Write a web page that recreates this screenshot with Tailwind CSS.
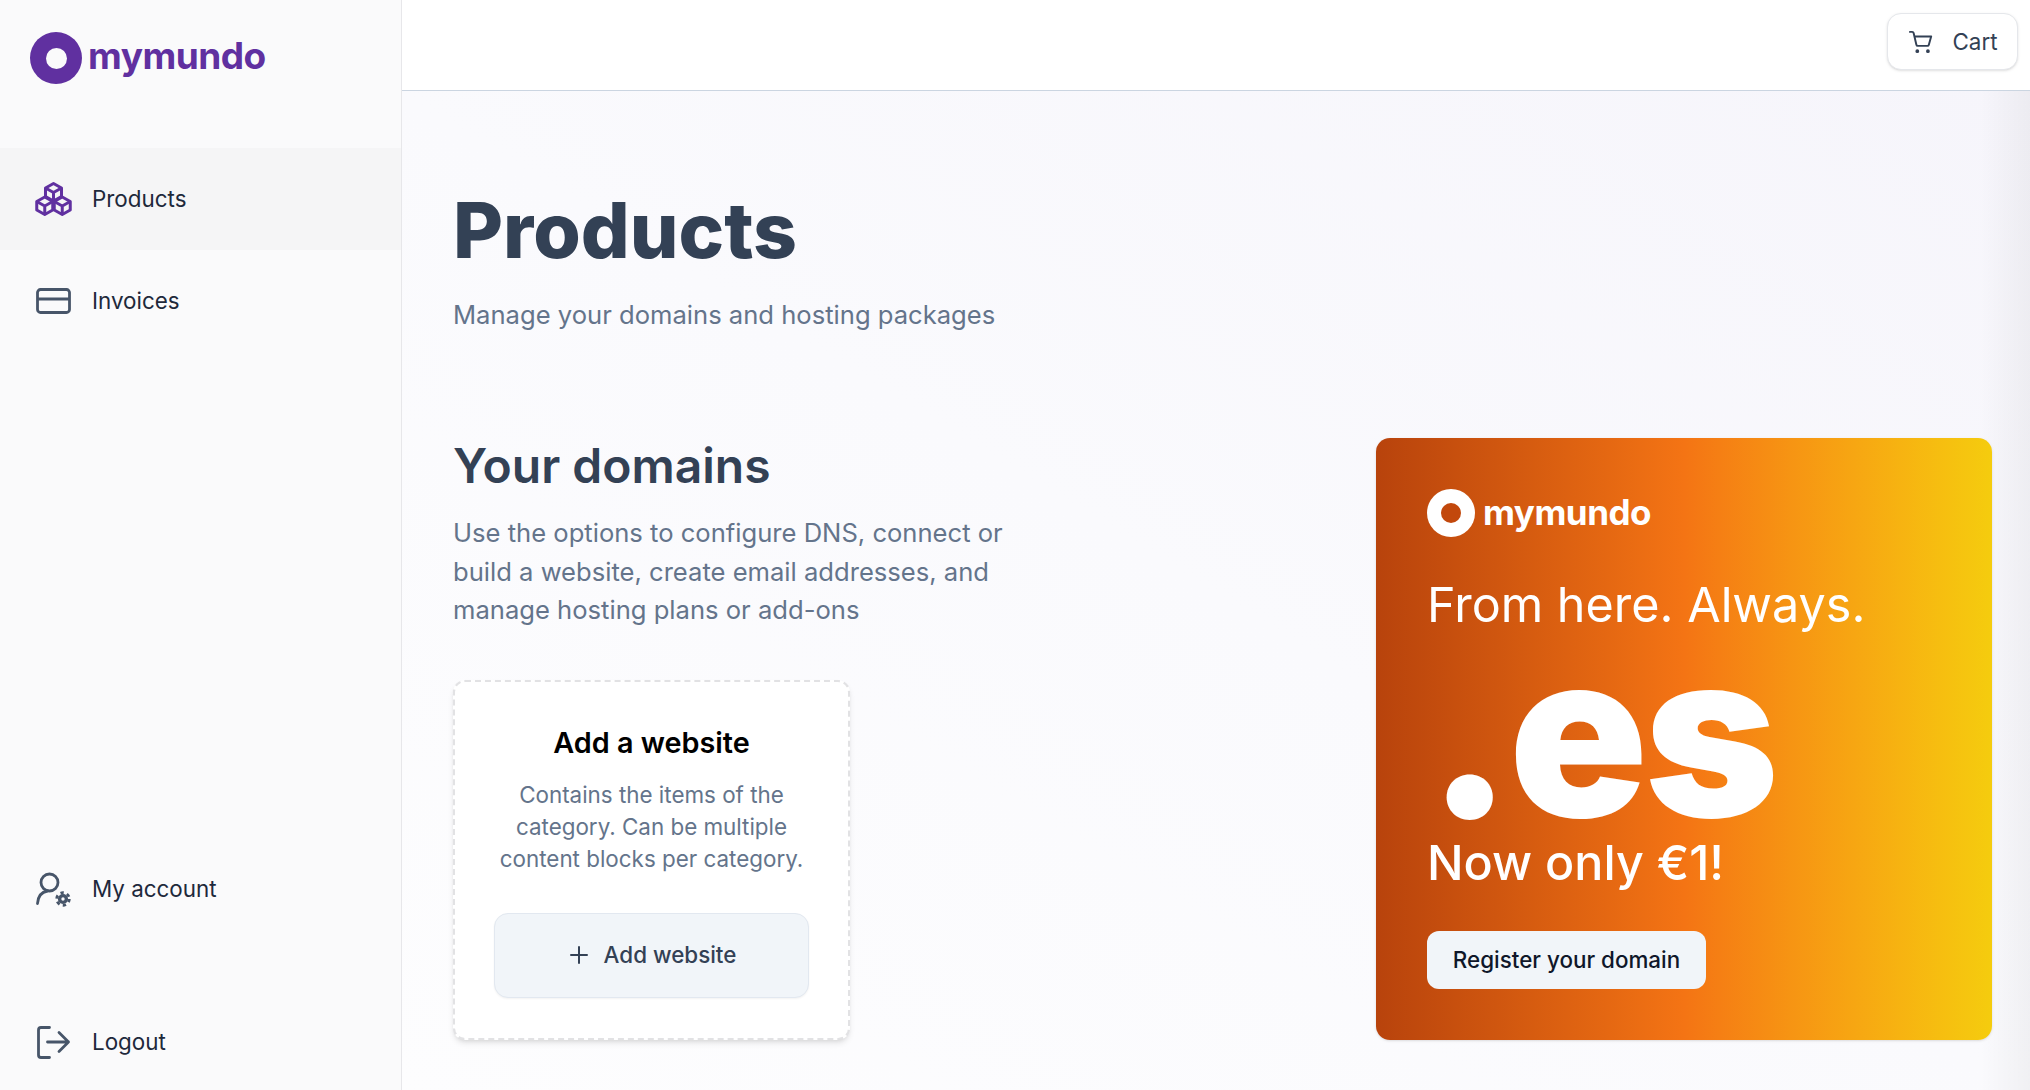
<!DOCTYPE html>
<html lang="en">
<head>
  <meta charset="UTF-8" />
  <meta name="viewport" content="width=device-width, initial-scale=1.0" />
  <script src="https://cdn.jsdelivr.net/npm/@tailwindcss/browser@4"></script>
  <title>Products</title>
</head>
<body class="h-screen overflow-hidden flex bg-white font-['Inter',sans-serif]">

  <!-- Sidebar -->
  <aside class="w-[402px] shrink-0 h-[1090px] flex flex-col bg-[#fafafb] border-r border-[#e7e7ea] overflow-hidden">
    <div class="h-[148px] pl-[30px] pt-[32px] flex items-start gap-[6px]">
      <div class="w-[52px] h-[52px] rounded-full bg-[#6030a0] flex items-center justify-center">
        <div class="w-[21px] h-[21px] rounded-full bg-[#fafafb]"></div>
      </div>
      <span class="pt-[2px] text-[37px] leading-[44px] font-bold tracking-[-0.5px] text-[#6030a0]">mymundo</span>
    </div>

    <nav class="flex flex-col">
      <a class="h-[102px] flex items-center bg-[#f5f5f6] pl-[35px] gap-[20px] text-[22.4px] text-[#1e293b]">
        <svg width="37" height="36" viewBox="0 0 37 36" fill="none" stroke="#6030a0" stroke-width="3" stroke-linejoin="round">
          <path d="M18.500 2.500l8 4.500v8.500l-8 4.500-8-4.500v-8.500z" />
          <path d="M10.500 7l8 4.500 8-4.500M18.500 11.500v8.500" />
          <path d="M9.750 16l8 4.500v8.500l-8 4.500-8-4.500v-8.500z" />
          <path d="M1.750 20.500l8 4.500 8-4.500M9.750 25v8.500" />
          <path d="M27.250 16l8 4.500v8.500l-8 4.500-8-4.500v-8.500z" />
          <path d="M19.250 20.500l8 4.500 8-4.500M27.250 25v8.500" />
        </svg>
        <span>Products</span>
      </a>
      <a class="h-[102px] flex items-center pl-[35px] gap-[20px] text-[22.4px] text-[#1e293b]">
        <svg width="37" height="36" viewBox="0 0 37 36" fill="none" stroke="#475569" stroke-width="2.800">
          <rect x="2.500" y="6.500" width="32" height="23" rx="3" />
          <path d="M2.500 16h32" />
        </svg>
        <span>Invoices</span>
      </a>
    </nav>

    <div class="mt-auto mb-[-3px] flex flex-col gap-[51px]">
      <a class="h-[102px] flex items-center pl-[35px] gap-[20px] text-[22.4px] text-[#1e293b]">
        <svg width="37" height="36" viewBox="0 0 37 36" fill="none" stroke="#475569" stroke-width="2.800" stroke-linecap="round">
          <circle cx="14.500" cy="11.500" r="8.500" />
          <path d="M2.500 32.500c.5-7 4-11.500 10-12.500" />
          <circle cx="28" cy="28" r="3.400" stroke-width="3.400" />
          <circle cx="28" cy="28" r="6.300" stroke-width="2.800" stroke-dasharray="3.300 3.300" stroke-linecap="butt" />
        </svg>
        <span>My account</span>
      </a>
      <a class="h-[102px] flex items-center pl-[35px] gap-[20px] text-[22.4px] text-[#1e293b]">
        <svg width="37" height="36" viewBox="0 0 37 36" fill="none" stroke="#475569" stroke-width="2.800" stroke-linecap="round" stroke-linejoin="round">
          <path d="M14.500 3.500H6a2.500 2.500 0 0 0-2.500 2.500v25A2.500 2.500 0 0 0 6 33.500h8.500" />
          <path d="M12.500 18h21M24 8.500l9.500 9.500-9.500 9.500" />
        </svg>
        <span>Logout</span>
      </a>
    </div>
  </aside>

  <!-- Main -->
  <div class="flex-1 min-w-0 h-[1090px] flex flex-col">
    <header class="h-[91px] shrink-0 bg-white border-b border-[#cbd5e1] flex items-start justify-end pt-[13px] pr-[12px]">
      <button class="w-[131px] h-[57px] flex items-center justify-center gap-[19px] pl-[2px] rounded-[14px] border border-[#e5e7eb] bg-white shadow-sm text-[22.4px] text-[#334155]">
        <svg width="24" height="24" viewBox="0 0 26 25" fill="none" stroke="#334155" stroke-width="2.100" stroke-linecap="round" stroke-linejoin="round">
          <path d="M1 1.500h2.500c.800 0 1.300.400 1.500 1.200L8 15.500c.200.800.700 1.200 1.500 1.200h10.500c.800 0 1.300-.400 1.500-1.200L24 6.500H6" />
          <circle cx="9" cy="22.500" r="1" fill="#334155" />
          <circle cx="20.500" cy="22.500" r="1" fill="#334155" />
        </svg>
        <span>Cart</span>
      </button>
    </header>

    <main class="relative flex-1 min-h-0 bg-linear-to-tr from-[#fdfdfe] via-[#fafafd] to-[#f6f5fb] pl-[51px] pr-[38px] flex flex-col">
      <div class="absolute inset-y-0 right-0 w-[50px] bg-linear-to-r from-transparent to-black/4"></div>
      <h1 class="mt-[100px] text-[76.8px] leading-[80px] font-extrabold text-[#334155]">Products</h1>
      <p class="mt-[25px] text-[25.6px] leading-[38px] text-[#64748b]">Manage your domains and hosting packages</p>

      <div class="relative mt-[104px] flex justify-between items-start">
        <div>
          <h2 class="text-[48px] leading-[56px] font-semibold text-[#334155]">Your domains</h2>
          <p class="mt-[20px] w-[570px] text-[25.6px] leading-[38.500px] text-[#64748b]">Use the options to configure DNS, connect or build a website, create email addresses, and manage hosting plans or add-ons</p>

          <div class="mt-[50px] w-[397px] h-[360px] rounded-[12px] border-2 border-dashed border-[#e2e2e4] bg-white shadow-md flex flex-col items-center px-[39px] pt-[43px]">
            <h3 class="text-[28.8px] leading-[36px] font-semibold text-black">Add a website</h3>
            <p class="mt-[18px] text-center text-[22.4px] leading-[32px] text-[#64748b]">Contains the items of the category. Can be multiple content blocks per category.</p>
            <button class="mt-[38px] w-[315px] h-[85px] shrink-0 flex items-center justify-center gap-[15px] pl-[2px] rounded-[14px] border border-[#e2e8f0] bg-[#f1f5f9] shadow-xs text-[22.4px] font-medium text-[#334155]">
              <svg width="20" height="20" viewBox="0 0 20 20" fill="none" stroke="#334155" stroke-width="2" stroke-linecap="round"><path d="M10 2v16M2 10h16" /></svg>
              <span>Add website</span>
            </button>
          </div>
        </div>

        <section class="w-[616px] h-[602px] rounded-[14px] bg-linear-to-r from-[#b8430c] via-[#f47414] via-50% to-[#f5cc0e] shadow-sm pl-[51px] pt-[51px] flex flex-col items-start text-white">
          <div class="flex items-center gap-[8px]">
            <div class="w-[48px] h-[48px] rounded-full bg-white flex items-center justify-center">
              <div class="w-[20px] h-[20px] rounded-full bg-[#c2480c]"></div>
            </div>
            <span class="pb-[3px] text-[35px] leading-[44px] font-bold tracking-[-0.5px]">mymundo</span>
          </div>
          <p class="mt-[38px] text-[48.5px] leading-[60px]">From here. Always.</p>
          <p class="mt-[9px] text-[229px] leading-[180px] font-black tracking-[-3.500px]">.es</p>
          <p class="mt-[9px] text-[48.4px] leading-[60px] font-medium">Now only €1!</p>
          <button class="mt-[38px] w-[279px] h-[58px] rounded-[12px] bg-[#f1f5f9] text-[22.4px] font-medium text-[#0f172a]">Register your domain</button>
        </section>
      </div>
    </main>
  </div>

</body>
</html>
